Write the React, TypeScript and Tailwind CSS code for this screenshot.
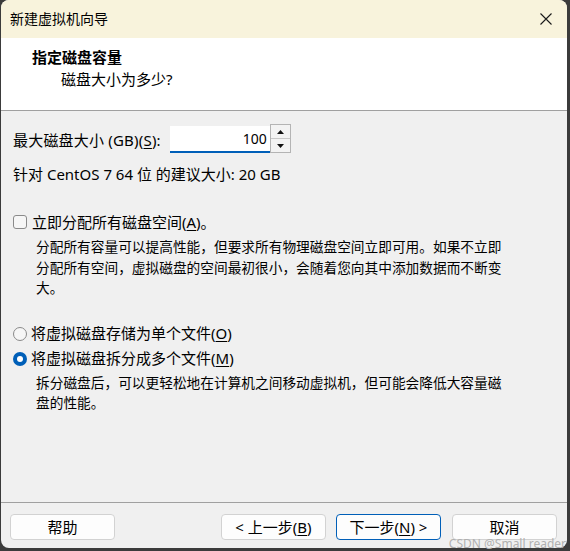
import React from 'react';

const font = "font-[family-name:'Noto_Sans','Noto_Sans_CJK_SC',sans-serif]";

function U({ children }: { children: React.ReactNode }) {
  return <span className="underline underline-offset-2">{children}</span>;
}

function Radio({ checked }: { checked?: boolean }) {
  if (checked) {
    return (
      <span className="flex h-[14px] w-[14px] items-center justify-center rounded-full bg-[#005fb8]">
        <span className="h-[6px] w-[6px] rounded-full bg-white" />
      </span>
    );
  }
  return <span className="h-[14px] w-[14px] rounded-full border border-[#8a8a8a] bg-[#f6f6f6]" />;
}

function Btn({ children, primary }: { children: React.ReactNode; primary?: boolean }) {
  return (
    <button
      className={
        primary
          ? 'flex h-[26px] w-[105px] items-center justify-center rounded-[4px] border border-[#005fb8] bg-[#fdfdfd] text-[15px] text-black'
          : 'flex h-[26px] w-[105px] items-center justify-center rounded-[4px] border border-[#d2d2d2] bg-[#fdfdfd] text-[15px] text-black'
      }
    >
      {children}
    </button>
  );
}

export default function App() {
  return (
    <div className={`${font} relative h-[551px] w-[570px] bg-[#3b3b3b] text-black`}>
      <div className="ml-[1px] flex h-[548px] w-[566px] flex-col overflow-hidden rounded-lg bg-[#f0f0f0]">
        {/* title bar */}
        <div className="flex h-[38px] items-center justify-between bg-[#f8f3dc] pl-[9px] pr-[14px]">
          <span className="text-[14px] leading-none">新建虚拟机向导</span>
          <svg width="12" height="12" viewBox="0 0 12 12" className="mr-[1px]">
            <path d="M0.5 0.5 L11.5 11.5 M11.5 0.5 L0.5 11.5" stroke="#1a1a1a" strokeWidth="1.1" />
          </svg>
        </div>

        {/* header */}
        <div className="h-[73px] border-b border-[#a0a0a0] bg-white pt-[9px]">
          <div className="pl-[31px] text-[15px] font-bold leading-[20px]">指定磁盘容量</div>
          <div className="mt-[2px] pl-[60px] text-[15px] leading-[20px]">磁盘大小为多少?</div>
        </div>

        {/* body */}
        <div className="flex-1 px-[12px] pt-[13px]">
          <div className="flex h-[29px] items-center">
            <span className="mt-[4px] text-[15px] leading-none tracking-[0.2px]">
              最大磁盘大小 (GB)(<U>S</U>):
            </span>
            <div className="ml-[9px] flex h-[27px] w-[100px] items-center justify-end self-end border-b-2 border-[#005fb8] bg-white pr-[3px] text-[14px]">
              100
            </div>
            <div className="flex h-[29px] w-[21px] flex-col border border-[#b4b4b4] bg-[#f3f3f3]">
              <div className="flex flex-1 items-center justify-center border-b border-[#c8c8c8]">
                <svg width="7" height="4" viewBox="0 0 7 4">
                  <path d="M3.5 0 L7 4 L0 4 Z" fill="#111" />
                </svg>
              </div>
              <div className="flex flex-1 items-center justify-center">
                <svg width="7" height="4" viewBox="0 0 7 4">
                  <path d="M0 0 L7 0 L3.5 4 Z" fill="#111" />
                </svg>
              </div>
            </div>
          </div>

          <div className="mt-[12px] text-[15px] leading-[18px]">针对 CentOS 7 64 位 的建议大小: 20 GB</div>

          <div className="mt-[29px] flex h-[20px] items-center">
            <span className="h-[14px] w-[14px] rounded-[3px] border border-[#8a8a8a] bg-[#f6f6f6]" />
            <span className="ml-[5px] text-[15px]">
              立即分配所有磁盘空间(<U>A</U>)。
            </span>
          </div>
          <div className="mt-[5px] pl-[23px] text-[13.7px] leading-[20.5px]">
            <div>分配所有容量可以提高性能，但要求所有物理磁盘空间立即可用。如果不立即</div>
            <div>分配所有空间，虚拟磁盘的空间最初很小，会随着您向其中添加数据而不断变</div>
            <div>大。</div>
          </div>

          <div className="mt-[25px] flex h-[20px] items-center">
            <Radio />
            <span className="ml-[4px] text-[15px]">
              将虚拟磁盘存储为单个文件(<U>O</U>)
            </span>
          </div>
          <div className="mt-[5px] flex h-[20px] items-center">
            <Radio checked />
            <span className="ml-[4px] text-[15px]">
              将虚拟磁盘拆分成多个文件(<U>M</U>)
            </span>
          </div>
          <div className="mt-[4px] pl-[23px] text-[13.7px] leading-[20px]">
            <div>拆分磁盘后，可以更轻松地在计算机之间移动虚拟机，但可能会降低大容量磁</div>
            <div>盘的性能。</div>
          </div>
        </div>

        {/* footer */}
        <div className="flex h-[46px] border-t border-[#a0a0a0] pl-[9px] pr-[10px] pt-[11px]">
          <Btn>帮助</Btn>
          <div className="ml-auto flex gap-[10px]">
            <Btn>
              &lt; 上一步(<U>B</U>)
            </Btn>
            <Btn primary>
              下一步(<U>N</U>) &gt;
            </Btn>
            <div className="ml-[1px]">
              <Btn>取消</Btn>
            </div>
          </div>
        </div>
      </div>

      <span className="absolute bottom-[1px] right-[4px] text-[12px] leading-none text-[#b0b0b0]">
        CSDN @Small reader
      </span>
    </div>
  );
}
